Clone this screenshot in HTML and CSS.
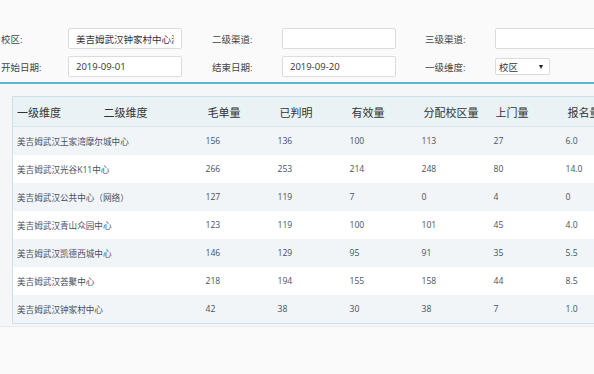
FILE: index.html
```html
<!DOCTYPE html>
<html lang="zh-CN">
    <head>
        <meta charset="UTF-8">
        <meta name="viewport" content="width=device-width, initial-scale=1.0">
        <title>渠道统计</title>
        <link rel="stylesheet" href="styles.css">
    </head>
    <body>
        <div class="filters">
            <label>校区:</label>
            <input type="text" value="美吉姆武汉钟家村中心测试">
            <span></span>
            <label>二级渠道:</label>
            <input type="text">
            <span></span>
            <label>三级渠道:</label>
            <input type="text">

            <label>开始日期:</label>
            <input type="text" value="2019-09-01">
            <span></span>
            <label>结束日期:</label>
            <input type="text" value="2019-09-20">
            <span></span>
            <label>一级维度:</label>
            <div class="select"><span>校区</span><i class="caret"></i></div>
        </div>

        <div class="panel">
            <table class="report">
                <colgroup>
                    <col class="c-first">
                    <col class="c-second">
                    <col class="c-num"><col class="c-num"><col class="c-num">
                    <col class="c-num"><col class="c-num"><col class="c-num">
                </colgroup>
                <thead>
                    <tr>
                        <th>一级维度</th><th>二级维度</th><th>毛单量</th><th>已判明</th>
                        <th>有效量</th><th>分配校区量</th><th>上门量</th><th>报名量</th>
                    </tr>
                </thead>
                <tbody id="rows"></tbody>
            </table>
        </div>

        <script>
            // 各中心数据
            const data = [
                ["美吉姆武汉王家湾摩尔城中心", 156, 136, 100, 113, 27, "6.0"],
                ["美吉姆武汉光谷K11中心", 266, 253, 214, 248, 80, "14.0"],
                ["美吉姆武汉公共中心（网络）", 127, 119, 7, 0, 4, "0"],
                ["美吉姆武汉青山众园中心", 123, 119, 100, 101, 45, "4.0"],
                ["美吉姆武汉凯德西城中心", 146, 129, 95, 91, 35, "5.5"],
                ["美吉姆武汉荟聚中心", 218, 194, 155, 158, 44, "8.5"],
                ["美吉姆武汉钟家村中心", 42, 38, 30, 38, 7, "1.0"]
            ];
            const tbody = document.getElementById("rows");
            data.forEach(row => {
                const tr = document.createElement("tr");
                tr.innerHTML = '<td colspan="2">' + row[0] + '</td>' +
                    row.slice(1).map(v => '<td>' + v + '</td>').join("");
                tbody.appendChild(tr);
            });
        </script>
    </body>
</html>
```

FILE: styles.css
```css
html, body {
    margin: 0;
    overflow: hidden;
}
body {
    background-color: #fafafa;
    font-family: "Open Sans", "Noto Sans CJK SC", sans-serif;
    color: #333;
    width: 594px;
    height: 374px;
}
.filters {
    display: grid;
    grid-template-columns: 68px 114px 29px 71px 114px 28px 71px 114px;
    grid-auto-rows: 21px;
    row-gap: 7px;
    align-items: center;
    padding-top: 28px;
    padding-bottom: 5px;
    border-bottom: 2px solid #5db6d0;
    font-size: 9.5px;
    width: 700px;
}
.filters label {
    padding-left: 1px;
    color: #444;
}
.filters input {
    box-sizing: border-box;
    height: 21px;
    width: 114px;
    border: 1px solid #dcdcdc;
    border-radius: 2px;
    background-color: #fff;
    padding: 0 7px;
    font-family: inherit;
    font-size: 9.5px;
    color: #333;
    outline: none;
}
.select {
    box-sizing: border-box;
    width: 55px;
    height: 17px;
    border: 1px solid #dcdcdc;
    border-radius: 2px;
    background-color: #fff;
    display: flex;
    align-items: center;
    justify-content: space-between;
    padding: 0 6px 0 3px;
    color: #333;
}
.caret {
    width: 0;
    height: 0;
    border-left: 2px solid transparent;
    border-right: 2px solid transparent;
    border-top: 4px solid #222;
}
.panel {
    background-color: #f5f6f7;
    padding: 12px 0 2px 12px;
    border-bottom: 1px solid #e6e8ea;
}
.report {
    border-collapse: collapse;
    table-layout: fixed;
    width: 621px;
    border: 1px solid #cde0e8;
}
.c-first { width: 87px; }
.c-second { width: 102px; }
.c-num { width: 72px; }
.report th {
    height: 29px;
    padding: 0 4px;
    text-align: left;
    font-weight: normal;
    font-size: 11px;
    color: #333;
    background-color: #e9f2f5;
    border-bottom: 1px solid #d6e6ec;
    white-space: nowrap;
}
.report th:nth-child(n+3) {
    padding-left: 6px;
}
.report td {
    height: 28px;
    padding: 0 4px;
    font-size: 8.6px;
    color: #4a5062;
    white-space: nowrap;
}
.report tbody tr:nth-child(odd) td {
    background-color: #f1f5f8;
}
.report tbody tr:nth-child(even) td {
    background-color: #fff;
}
```
